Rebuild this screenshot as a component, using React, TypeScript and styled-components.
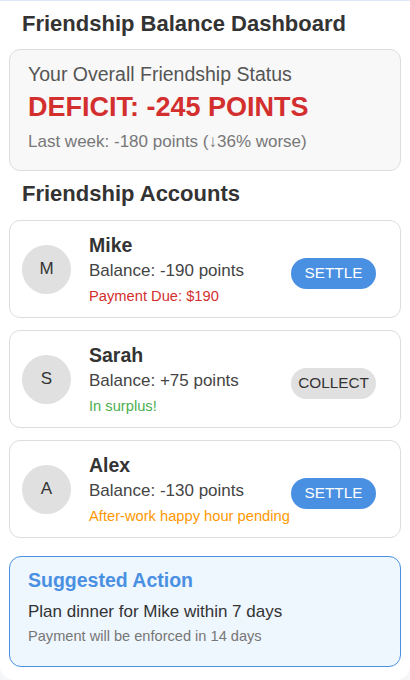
import React from "react";
import styled, { createGlobalStyle } from "styled-components";

const Global = createGlobalStyle`
  html, body { margin: 0; padding: 0; background: #f4f6f8; }
  body { font-family: "Liberation Sans", Arial, sans-serif; color: #333; }
`;

const Page = styled.div`
  box-sizing: border-box;
  width: 410px;
  height: 680px;
  background: #ffffff;
  border-top: 1px solid #dde9f8;
  border-radius: 0 0 14px 14px;
  padding: 0 9px;
  display: flex;
  flex-direction: column;
  overflow: hidden;
`;

const Title = styled.h1`
  margin: 10px 0 0 13px;
  font-size: 22px;
  line-height: 25px;
  font-weight: 700;
  color: #333;
`;

const SectionTitle = styled(Title)`
  margin-top: 10px;
`;

const StatusCard = styled.section`
  margin-top: 13px;
  background: #f8f8f8;
  border: 1px solid #dddddd;
  border-radius: 11px;
  padding: 14px 18px 19px;
  display: flex;
  flex-direction: column;
`;

const StatusLabel = styled.div`
  font-size: 19.5px;
  line-height: 21px;
  color: #555;
`;

const Deficit = styled.div`
  margin-top: 7px;
  font-size: 27px;
  line-height: 30px;
  font-weight: 700;
  color: #d32f2f;
`;

const LastWeek = styled.div`
  margin-top: 11px;
  font-size: 17px;
  line-height: 18px;
  color: #777;
`;

const List = styled.div`
  margin-top: 14px;
  display: flex;
  flex-direction: column;
  gap: 12px;
`;

const AccountCard = styled.div`
  box-sizing: border-box;
  height: 98px;
  background: #fff;
  border: 1px solid #dddddd;
  border-radius: 11px;
  padding: 0 24px 0 12px;
  display: flex;
  align-items: center;
`;

const Avatar = styled.div`
  width: 49px;
  height: 49px;
  border-radius: 50%;
  background: #e0e0e0;
  color: #333;
  font-size: 17px;
  display: flex;
  align-items: center;
  justify-content: center;
  flex-shrink: 0;
`;

const Info = styled.div`
  flex: 1;
  margin-left: 18px;
  display: flex;
  flex-direction: column;
`;

const Name = styled.div`
  font-size: 19.5px;
  line-height: 21px;
  font-weight: 700;
  color: #333;
`;

const Balance = styled.div`
  margin-top: 5px;
  font-size: 17px;
  line-height: 19px;
  color: #444;
`;

const Note = styled.div<{ $tone: string }>`
  margin-top: 8px;
  font-size: 14.7px;
  line-height: 16px;
  color: ${(p) => p.$tone};
`;

const ActionButton = styled.button<{ $primary: boolean }>`
  width: 85px;
  height: 31px;
  margin-top: 8px;
  border: none;
  border-radius: 16px;
  background: ${(p) => (p.$primary ? "#4a90e2" : "#e0e0e0")};
  color: ${(p) => (p.$primary ? "#fff" : "#333")};
  font-family: "Liberation Sans", Arial, sans-serif;
  font-size: 15.3px;
  padding: 0;
  text-transform: uppercase;
  flex-shrink: 0;
`;

const Suggestion = styled.section`
  margin-top: 18px;
  background: #eef6fe;
  border: 1px solid #4a90e2;
  border-radius: 12px;
  padding: 13px 18px 22px;
  display: flex;
  flex-direction: column;
`;

const SuggestionTitle = styled.div`
  font-size: 19.5px;
  line-height: 21px;
  font-weight: 700;
  color: #4a90e2;
`;

const SuggestionText = styled.div`
  margin-top: 11px;
  font-size: 17px;
  line-height: 19px;
  color: #333;
`;

const SuggestionNote = styled.div`
  margin-top: 7px;
  font-size: 14.6px;
  line-height: 16px;
  color: #777;
`;

const accounts = [
  { initial: "M", name: "Mike", balance: "Balance: -190 points", note: "Payment Due: $190", tone: "#d32f2f", action: "Settle", primary: true },
  { initial: "S", name: "Sarah", balance: "Balance: +75 points", note: "In surplus!", tone: "#4caf50", action: "Collect", primary: false },
  { initial: "A", name: "Alex", balance: "Balance: -130 points", note: "After-work happy hour pending", tone: "#ff9800", action: "Settle", primary: true },
];

export default function App() {
  return (
    <>
      <Global />
      <Page>
        <Title>Friendship Balance Dashboard</Title>
        <StatusCard>
          <StatusLabel>Your Overall Friendship Status</StatusLabel>
          <Deficit>DEFICIT: -245 POINTS</Deficit>
          <LastWeek>Last week: -180 points (↓36% worse)</LastWeek>
        </StatusCard>
        <SectionTitle>Friendship Accounts</SectionTitle>
        <List>
          {accounts.map((a) => (
            <AccountCard key={a.name}>
              <Avatar>{a.initial}</Avatar>
              <Info>
                <Name>{a.name}</Name>
                <Balance>{a.balance}</Balance>
                <Note $tone={a.tone}>{a.note}</Note>
              </Info>
              <ActionButton $primary={a.primary}>{a.action}</ActionButton>
            </AccountCard>
          ))}
        </List>
        <Suggestion>
          <SuggestionTitle>Suggested Action</SuggestionTitle>
          <SuggestionText>Plan dinner for Mike within 7 days</SuggestionText>
          <SuggestionNote>Payment will be enforced in 14 days</SuggestionNote>
        </Suggestion>
      </Page>
    </>
  );
}
